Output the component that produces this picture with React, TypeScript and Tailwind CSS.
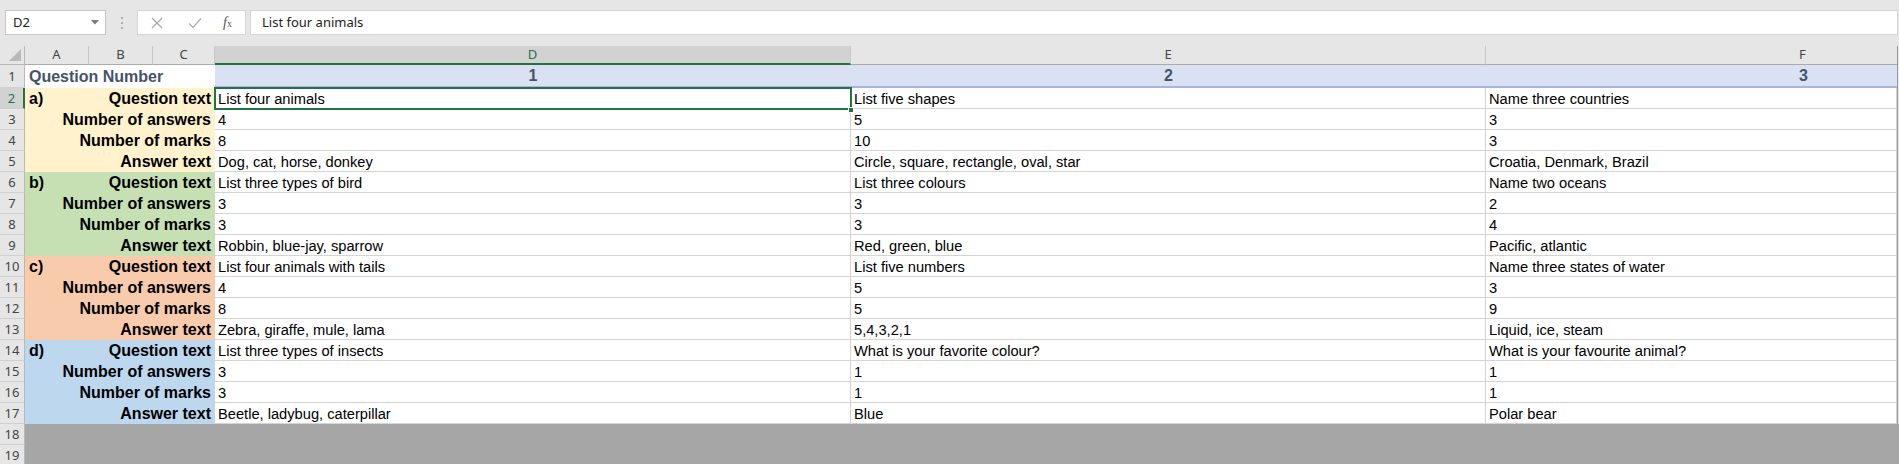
import React from "react";

type Row = { n: number; sec?: string; label: string; d: string; e: string; f: string; bg: string };

const SEC_BG: Record<string, string> = {
  a: "bg-[#fff2cc]",
  b: "bg-[#c6e0b4]",
  c: "bg-[#f8cbad]",
  d: "bg-[#bdd7ee]",
};

const raw: [string, string, string, string][][] = [
  [
    ["Question text", "List four animals", "List five shapes", "Name three countries"],
    ["Number of answers", "4", "5", "3"],
    ["Number of marks", "8", "10", "3"],
    ["Answer text", "Dog, cat, horse, donkey", "Circle, square, rectangle, oval, star", "Croatia, Denmark, Brazil"],
  ],
  [
    ["Question text", "List three types of bird", "List three colours", "Name two oceans"],
    ["Number of answers", "3", "3", "2"],
    ["Number of marks", "3", "3", "4"],
    ["Answer text", "Robbin, blue-jay, sparrow", "Red, green, blue", "Pacific, atlantic"],
  ],
  [
    ["Question text", "List four animals with tails", "List five numbers", "Name three states of water"],
    ["Number of answers", "4", "5", "3"],
    ["Number of marks", "8", "5", "9"],
    ["Answer text", "Zebra, giraffe, mule, lama", "5,4,3,2,1", "Liquid, ice, steam"],
  ],
  [
    ["Question text", "List three types of insects", "What is your favorite colour?", "What is your favourite animal?"],
    ["Number of answers", "3", "1", "1"],
    ["Number of marks", "3", "1", "1"],
    ["Answer text", "Beetle, ladybug, caterpillar", "Blue", "Polar bear"],
  ],
];

const secKeys = ["a", "b", "c", "d"];
const rows: Row[] = [];
raw.forEach((sec, si) => {
  sec.forEach((r, ri) => {
    rows.push({
      n: 2 + si * 4 + ri,
      sec: ri === 0 ? secKeys[si] + ")" : undefined,
      label: r[0],
      d: r[1],
      e: r[2],
      f: r[3],
      bg: SEC_BG[secKeys[si]],
    });
  });
});

const uiFont = { fontFamily: '"Noto Sans", "Segoe UI", Arial, sans-serif' };
const cellFont = { fontFamily: '"Liberation Sans", Arial, sans-serif' };

function RowHeader({ n, selected }: { n: number; selected?: boolean }) {
  return (
    <div
      style={uiFont}
      className={
        "w-[25px] shrink-0 h-full flex items-center justify-center pt-[1px] text-[13px] border-b border-[#d0d0d0] " +
        (selected
          ? "bg-[#d2d2d2] text-[#217346] border-r-2 border-r-[#217346]"
          : "bg-[#e6e6e6] text-[#444444] border-r border-r-[#b8b8b8]")
      }
    >
      {n}
    </div>
  );
}

function Cell({ text, w }: { text: string; w?: string }) {
  return (
    <div
      className={
        (w ? w + " shrink-0 " : "flex-1 min-w-0 ") +
        "h-full bg-white border-r border-b border-[#d4d4d4] pl-[3px] pt-[1px] flex items-center text-[14.67px] text-black whitespace-nowrap overflow-hidden"
      }
    >
      {text}
    </div>
  );
}

export default function App() {
  return (
    <div className="w-[1899px] h-[464px] overflow-hidden relative bg-[#e6e6e6]" style={cellFont}>
      {/* Formula bar */}
      <div className="h-[46px] flex items-start pt-[10px]">
        <div
          style={uiFont}
          className="ml-[5px] w-[101px] h-[25px] bg-white border border-[#c6c6c6] flex items-center justify-between pl-[7px] pr-[6px] text-[13px] text-[#222]"
        >
          <span>D2</span>
          <svg width="8" height="5" viewBox="0 0 8 5">
            <path d="M0 0 L8 0 L4 4.5 Z" fill="#7a7a7a" />
          </svg>
        </div>
        <div className="w-[31px] h-[25px] flex flex-col items-center justify-center gap-[3px]">
          <div className="w-[2px] h-[2px] bg-[#b0b0b0]" />
          <div className="w-[2px] h-[2px] bg-[#b0b0b0]" />
          <div className="w-[2px] h-[2px] bg-[#b0b0b0]" />
        </div>
        <div className="w-[109px] h-[25px] bg-white border border-[#d6d6d6] flex items-center pl-[12px]">
          <svg width="12" height="12" viewBox="0 0 12 12" className="ml-[1px]">
            <path d="M1 1 L11 11 M11 1 L1 11" stroke="#a8a8a8" strokeWidth="1.2" fill="none" />
          </svg>
          <svg width="14" height="12" viewBox="0 0 14 12" className="ml-[25px]">
            <path d="M1 6.5 L5 10.5 L13 1.5" stroke="#a8a8a8" strokeWidth="1.2" fill="none" />
          </svg>
          <span
            className="ml-[21px] italic text-[14px] text-[#555] leading-none"
            style={{ fontFamily: '"Liberation Serif", "Times New Roman", serif' }}
          >
            f<span className="text-[10px] not-italic">x</span>
          </span>
        </div>
        <div
          style={uiFont}
          className="ml-[4px] flex-1 h-[25px] bg-white border border-[#d6d6d6] flex items-center pl-[11px] text-[13px] text-[#222] mr-[1px]"
        >
          List four animals
        </div>
      </div>

      {/* Column headers */}
      <div className="flex h-[19px]" style={uiFont}>
        <div className="w-[25px] shrink-0 h-full bg-[#e6e6e6] border-r border-b border-[#b8b8b8] flex items-end justify-end pr-[3px] pb-[3px]">
          <svg width="12" height="12" viewBox="0 0 12 12">
            <path d="M12 0 L12 12 L0 12 Z" fill="#b9b9b9" />
          </svg>
        </div>
        {[
          ["A", "w-[64px]"],
          ["B", "w-[64px]"],
          ["C", "w-[62px]"],
        ].map(([l, w]) => (
          <div
            key={l}
            className={w + " shrink-0 h-full bg-[#e6e6e6] border-r border-r-[#c8c8c8] border-b border-b-[#ababab] flex items-center justify-center text-[13px] text-[#444]"}
          >
            {l}
          </div>
        ))}
        <div className="w-[636px] shrink-0 h-full bg-[#d2d2d2] border-r border-r-[#c8c8c8] border-b-2 border-b-[#217346] flex items-center justify-center text-[13px] text-[#217346]">
          D
        </div>
        <div className="w-[635px] shrink-0 h-full bg-[#e6e6e6] border-r border-r-[#c8c8c8] border-b border-b-[#ababab] flex items-center justify-center text-[13px] text-[#444]">
          E
        </div>
        <div className="flex-1 h-full bg-[#e6e6e6] border-b border-b-[#ababab] flex items-center text-[13px] text-[#444]">
          <span className="ml-[313px]">F</span>
        </div>
        <div className="w-[2px] shrink-0 h-full border-l border-[#9a9a9a] bg-[#e6e6e6]" />
      </div>

      {/* Row 1 */}
      <div className="flex h-[23px]">
        <RowHeader n={1} />
        <div className="w-[190px] shrink-0 h-full bg-white flex items-center pl-[4px] pt-[1px] text-[16px] font-bold text-[#44546a]">
          Question Number
        </div>
        <div className="w-[636px] shrink-0 h-full bg-[#d9e1f2] border-b-2 border-[#a9b6dc] flex items-center justify-center pt-[1px] text-[16px] font-bold text-[#44546a]">
          1
        </div>
        <div className="w-[635px] shrink-0 h-full bg-[#d9e1f2] border-b-2 border-[#a9b6dc] flex items-center justify-center pt-[1px] text-[16px] font-bold text-[#44546a]">
          2
        </div>
        <div className="flex-1 h-full bg-[#d9e1f2] border-b-2 border-[#a9b6dc] flex items-center pt-[1px] text-[16px] font-bold text-[#44546a]">
          <span className="ml-[313px]">3</span>
        </div>
        <div className="w-[2px] shrink-0 h-full border-l border-[#9a9a9a] bg-[#e6e6e6]" />
      </div>

      {/* Data rows */}
      {rows.map((r) => (
        <div key={r.n} className="flex h-[21px]">
          <RowHeader n={r.n} selected={r.n === 2} />
          <div className={"w-[190px] shrink-0 h-full flex items-center justify-between pl-[4px] pr-[4px] pt-[1px] text-[16px] font-bold text-black whitespace-nowrap " + r.bg}>
            <span>{r.sec ?? ""}</span>
            <span>{r.label}</span>
          </div>
          <Cell text={r.d} w="w-[636px]" />
          <Cell text={r.e} w="w-[635px]" />
          <Cell text={r.f} />
          <div className="w-[2px] shrink-0 h-full border-l border-[#9a9a9a] bg-[#e6e6e6]" />
        </div>
      ))}

      {/* Empty rows */}
      {[18, 19].map((n) => (
        <div key={n} className="flex h-[21px]">
          <RowHeader n={n} />
          <div className="flex-1 h-full bg-[#a6a6a6]" />
        </div>
      ))}

      {/* Selection on D2 */}
      <div className="absolute left-[214px] top-[87px] w-[638px] h-[23px] border-2 border-[#217346] pointer-events-none" />
      <div className="absolute left-[848px] top-[107px] w-[6px] h-[6px] bg-[#217346] border border-white" />
    </div>
  );
}
